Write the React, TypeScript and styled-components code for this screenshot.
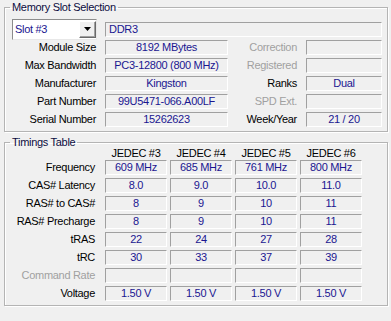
import { createGlobalStyle, styled } from "styled-components";

const GlobalStyle = createGlobalStyle`
    html, body {
        margin: 0;
        padding: 0;
        background: #f0f0f0;
    }
`;

const slotInfo = [
    { label: "Module Size", value: "8192 MBytes", side: "Correction", sideValue: "", sideOff: true },
    { label: "Max Bandwidth", value: "PC3-12800 (800 MHz)", side: "Registered", sideValue: "", sideOff: true },
    { label: "Manufacturer", value: "Kingston", side: "Ranks", sideValue: "Dual", sideOff: false },
    { label: "Part Number", value: "99U5471-066.A00LF", side: "SPD Ext.", sideValue: "", sideOff: true },
    { label: "Serial Number", value: "15262623", side: "Week/Year", sideValue: "21 / 20", sideOff: false },
];

const jedec = ["JEDEC #3", "JEDEC #4", "JEDEC #5", "JEDEC #6"];

const timings = [
    { label: "Frequency", values: ["609 MHz", "685 MHz", "761 MHz", "800 MHz"] },
    { label: "CAS# Latency", values: ["8.0", "9.0", "10.0", "11.0"] },
    { label: "RAS# to CAS#", values: ["8", "9", "10", "11"] },
    { label: "RAS# Precharge", values: ["8", "9", "10", "11"] },
    { label: "tRAS", values: ["22", "24", "27", "28"] },
    { label: "tRC", values: ["30", "33", "37", "39"] },
    { label: "Command Rate", values: ["", "", "", ""], off: true },
    { label: "Voltage", values: ["1.50 V", "1.50 V", "1.50 V", "1.50 V"] },
];

export default function App()
{
    return (
        <Window>
            <GlobalStyle />
            <Group $padTop={6}>
                <Legend>Memory Slot Selection</Legend>
                <TopRow>
                    <Combo>
                        <ComboText>Slot #3</ComboText>
                        <ComboButton>
                            <svg width="7" height="4" viewBox="0 0 7 4">
                                <path d="M0 0h7L3.5 4z" fill="#000" />
                            </svg>
                        </ComboButton>
                    </Combo>
                    <Field $align="left">DDR3</Field>
                </TopRow>
                <InfoGrid>
                    {
                        slotInfo.map((row) => (
                            <Row key={row.label}>
                                <Label>{ row.label }</Label>
                                <Field>{ row.value }</Field>
                                <Label $off={row.sideOff}>{ row.side }</Label>
                                <Field>{ row.sideValue }</Field>
                            </Row>
                        ))
                    }
                </InfoGrid>
            </Group>

            <Group $padTop={0} $gap>
                <Legend>Timings Table</Legend>
                <TimingsHead>
                    <span />
                    { jedec.map((j) => <HeadCell key={j}>{ j }</HeadCell>) }
                </TimingsHead>
                <TimingsGrid>
                    {
                        timings.map((row) => (
                            <Row key={row.label}>
                                <TimingLabel $off={row.off}>{ row.label }</TimingLabel>
                                {
                                    row.values.map((v, i) => (
                                        <Field key={i}>{ v }</Field>
                                    ))
                                }
                            </Row>
                        ))
                    }
                </TimingsGrid>
            </Group>
        </Window>
    );
}

const Window = styled.div`
    width: 391px;
    height: 321px;
    box-sizing: border-box;
    padding-top: 3px;
    background: #f0f0f0;
    font-family: "Liberation Sans", Arial, sans-serif;
    font-size: 11px;
    letter-spacing: -0.3px;
    color: #000;
    overflow: hidden;
`;

const Group = styled.fieldset<{ $gap?: boolean; $padTop: number }>`
    box-sizing: border-box;
    width: 384px;
    margin: ${props => props.$gap ? "6px" : "0"} 0 0 4px;
    padding: ${props => props.$padTop}px 5px 4px 7px;
    border: 1px solid #b4b4b4;
    box-shadow: inset 1px 1px 0 #fff, 1px 1px 0 #fff;
    min-width: 0;
`;

const Legend = styled.legend`
    margin-left: -2px;
    padding: 0 2px;
    height: 9px;
    line-height: 9px;
    color: #0c0c40;
`;

const TopRow = styled.div`
    display: flex;
    align-items: center;
    gap: 8px;
    height: 22px;
`;

const Combo = styled.div`
    box-sizing: border-box;
    width: 85px;
    height: 21px;
    flex: none;
    display: flex;
    align-items: center;
    background: #fff;
    border: 1px solid;
    border-color: #8c8c8c #e8e8e8 #e8e8e8 #8c8c8c;
`;

const ComboText = styled.span`
    flex: 1;
    padding-left: 2px;
    color: #1a1690;
`;

const ComboButton = styled.div`
    box-sizing: border-box;
    width: 17px;
    height: 17px;
    display: flex;
    align-items: center;
    justify-content: center;
    background: #f0f0f0;
    border: 1px solid;
    border-color: #fff #696969 #696969 #fff;
    box-shadow: inset -1px -1px 0 #a0a0a0;
`;

const InfoGrid = styled.div`
    display: grid;
    grid-template-columns: 93px 123px 78px 76px;
    grid-auto-rows: 15px;
    row-gap: 3px;
`;

const Row = styled.div`
    display: contents;
`;

const Label = styled.div<{ $off?: boolean }>`
    text-align: right;
    padding-right: 9px;
    line-height: 15px;
    white-space: nowrap;
    color: ${props => props.$off ? "#a0a0a0" : "#000"};
`;

const Field = styled.div<{ $align?: "left" | "center" }>`
    box-sizing: border-box;
    flex: 1;
    height: 15px;
    line-height: 13px;
    padding: 0 3px;
    border: 1px solid;
    border-color: #a0a0a0 #fff #fff #a0a0a0;
    text-align: ${props => props.$align ?? "center"};
    color: #1a1690;
    white-space: nowrap;
    overflow: hidden;
`;

const TimingsHead = styled.div`
    display: grid;
    grid-template-columns: 90px repeat(4, 62px);
    column-gap: 3px;
    height: 13px;
    line-height: 13px;
`;

const HeadCell = styled.div`
    text-align: center;
`;

const TimingsGrid = styled.div`
    display: grid;
    grid-template-columns: 90px repeat(4, 62px);
    column-gap: 3px;
    grid-auto-rows: 15px;
    row-gap: 3px;
`;

const TimingLabel = styled(Label)`
    padding-right: 7px;
`;
